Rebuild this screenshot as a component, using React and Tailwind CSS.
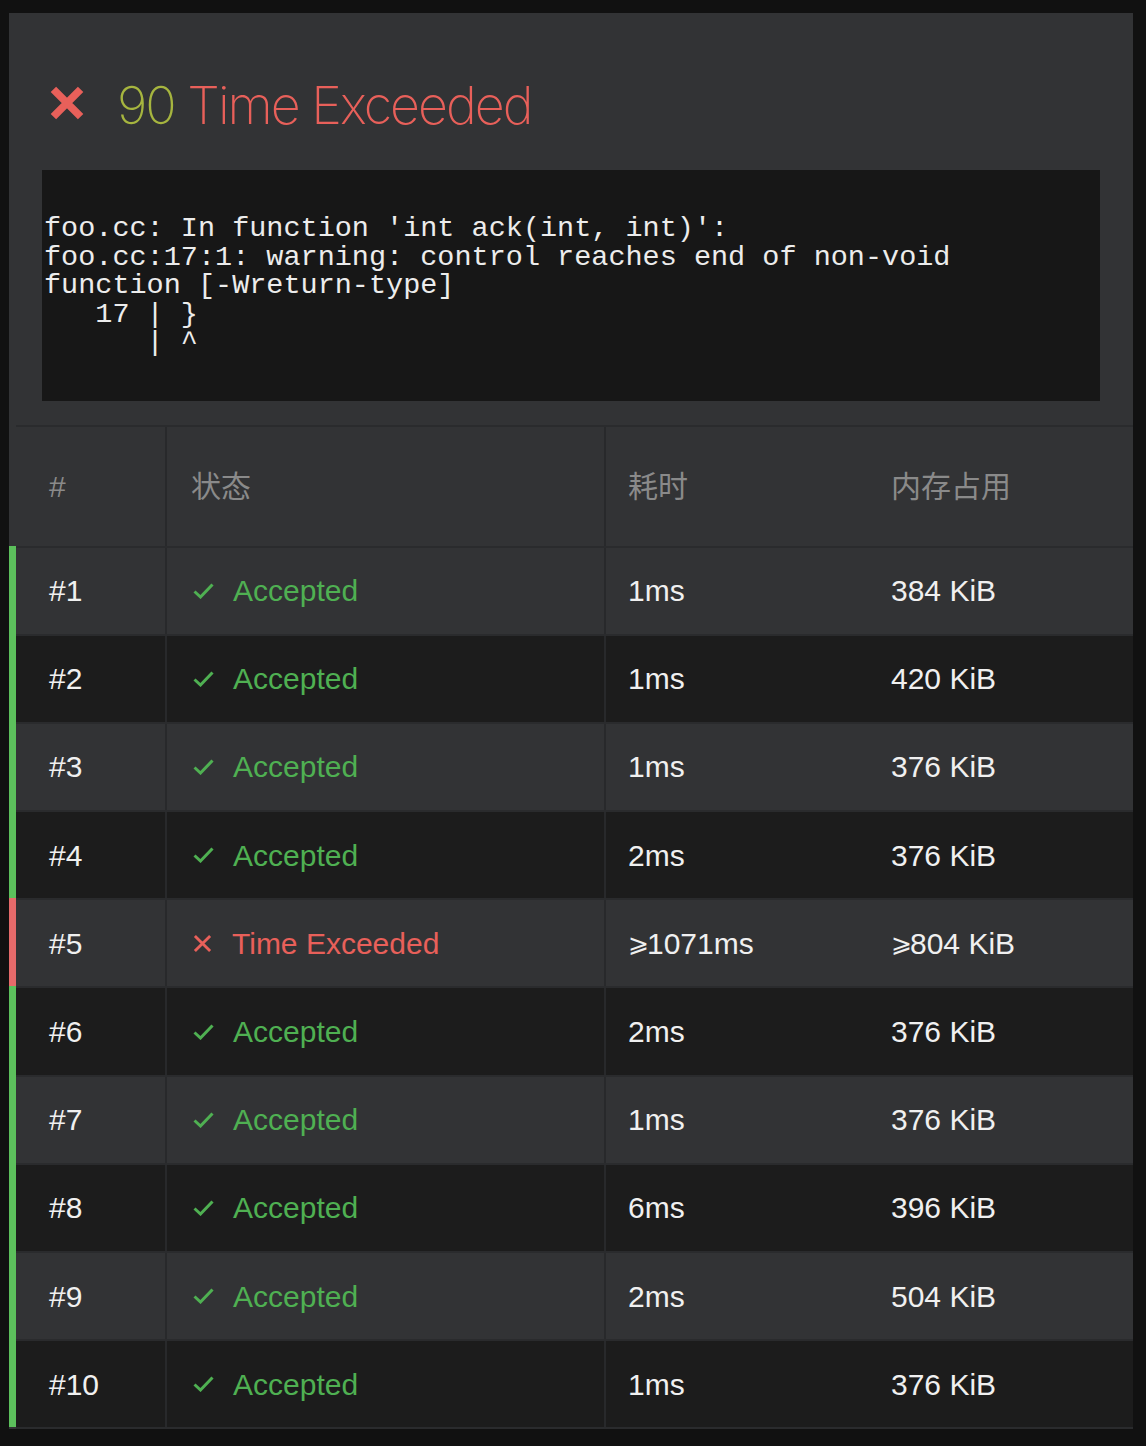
const rows = [
  { id: 1, ok: true, time: '1ms', mem: '384 KiB' },
  { id: 2, ok: true, time: '1ms', mem: '420 KiB' },
  { id: 3, ok: true, time: '1ms', mem: '376 KiB' },
  { id: 4, ok: true, time: '2ms', mem: '376 KiB' },
  { id: 5, ok: false, time: '1071ms', mem: '804 KiB', capped: true },
  { id: 6, ok: true, time: '2ms', mem: '376 KiB' },
  { id: 7, ok: true, time: '1ms', mem: '376 KiB' },
  { id: 8, ok: true, time: '6ms', mem: '396 KiB' },
  { id: 9, ok: true, time: '2ms', mem: '504 KiB' },
  { id: 10, ok: true, time: '1ms', mem: '376 KiB' },
]

const compileLog = `foo.cc: In function 'int ack(int, int)':
foo.cc:17:1: warning: control reaches end of non-void
function [-Wreturn-type]
   17 | }
      | ^`

function CheckIcon() {
  return (
    <svg width="21" height="16" viewBox="0 0 21 16" fill="none" className="shrink-0">
      <path d="M1.5 8.5 L7.5 14 L19.5 1.5" stroke="#4fb052" strokeWidth="3" />
    </svg>
  )
}

function CrossIcon({ size = 19, stroke = 3 }) {
  return (
    <svg width={size} height={size} viewBox="0 0 20 20" fill="none" className="shrink-0">
      <path d="M2 2 L18 18 M18 2 L2 18" stroke="#e8605a" strokeWidth={stroke} />
    </svg>
  )
}

function Capped({ on }) {
  if (!on) return null
  return <span className="text-[25px] tracking-[-2px]">⩾</span>
}

export default function App() {
  return (
    <div className="min-h-[1446px] bg-[#111111] pt-[13px] pl-[9px] pr-[13px] font-['Liberation_Sans',Arial,sans-serif]">
      <div className="bg-[#323335]">
        {/* Title */}
        <div className="flex items-center pl-[41px] pt-[64px] h-[121px]">
          <div className="mb-[6px]">
            <CrossIcon size={34} stroke={4.5} />
          </div>
          <div className="ml-[33px] text-[52px] leading-none font-extralight tracking-[-2px] font-['Inter','Roboto',sans-serif]">
            <span className="text-[#a6b53f]">90</span>
            <span className="text-[#e8605a]"> Time Exceeded</span>
          </div>
        </div>

        {/* Compiler output */}
        <div className="mx-[33px] mt-[36px] bg-[#171717]">
          <pre className="pl-[2px] pt-[45px] pb-[43px] text-[28.5px] leading-[28.5px] text-[#ececec] font-['Liberation_Mono','Courier_New',monospace] whitespace-pre">
            {compileLog}
          </pre>
        </div>

        {/* Test cases */}
        <div className="mt-[24px] ml-[7px]">
          <div className="flex border-t-2 border-[#2a2b2d] h-[121px] text-[30px] text-[#8a8a8a] font-['Liberation_Sans','Noto_Sans_CJK_SC',sans-serif]">
            <div className="w-[151px] border-r-2 border-[#28292b] flex items-center pl-[33px]">#</div>
            <div className="w-[439px] border-r-2 border-[#28292b] flex items-center pl-[24px]">状态</div>
            <div className="w-[263px] flex items-center pl-[22px]">耗时</div>
            <div className="flex-1 flex items-center pl-[22px]">内存占用</div>
          </div>

          {rows.map((r, i) => (
            <div key={r.id} className="flex -ml-[7px]">
              <div className={r.ok ? 'w-[7px] bg-[#5cc05c]' : 'w-[7px] bg-[#e66a6a]'} />
              <div
                className={
                  'flex-1 flex border-t-2 border-[#2a2b2d] h-[88.2px] text-[30px] text-[#f0f0f0] ' +
                  (i % 2 === 0 ? 'bg-[#323335]' : 'bg-[#1c1c1c]')
                }
              >
                <div className="w-[151px] border-r-2 border-[#28292b] flex items-center pl-[33px]">#{r.id}</div>
                <div className="w-[439px] border-r-2 border-[#28292b] flex items-center pl-[26px]">
                  {r.ok ? <CheckIcon /> : <CrossIcon />}
                  <span className={r.ok ? 'ml-[19px] text-[#4fb052]' : 'ml-[20px] text-[#e8605a]'}>
                    {r.ok ? 'Accepted' : 'Time Exceeded'}
                  </span>
                </div>
                <div className="w-[263px] flex items-center pl-[22px]">
                  <Capped on={r.capped} />
                  {r.time}
                </div>
                <div className="flex-1 flex items-center pl-[22px]">
                  <Capped on={r.capped} />
                  {r.mem}
                </div>
              </div>
            </div>
          ))}
          <div className="h-[2px] bg-[#2a2b2d]" />
        </div>
      </div>
    </div>
  )
}
